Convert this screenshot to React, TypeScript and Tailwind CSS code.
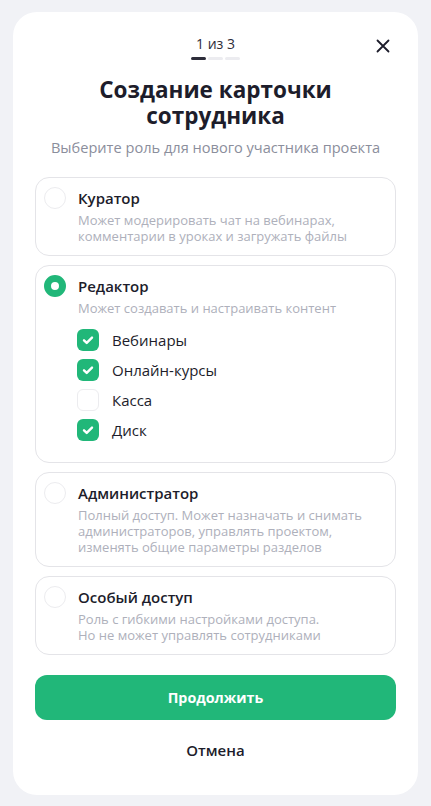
import { useState } from "react";

const roles = [
  {
    id: "curator",
    title: "Куратор",
    lines: ["Может модерировать чат на вебинарах,", "комментарии в уроках и загружать файлы"],
  },
  {
    id: "editor",
    title: "Редактор",
    lines: ["Может создавать и настраивать контент"],
  },
  {
    id: "admin",
    title: "Администратор",
    lines: [
      "Полный доступ. Может назначать и снимать",
      "администраторов, управлять проектом,",
      "изменять общие параметры разделов",
    ],
  },
  {
    id: "special",
    title: "Особый доступ",
    lines: ["Роль с гибкими настройками доступа.", "Но не может управлять сотрудниками"],
  },
];

const sections = ["Вебинары", "Онлайн-курсы", "Касса", "Диск"];

function Check({ on }: { on: boolean }) {
  if (!on)
    return <span className="w-[22px] h-[22px] rounded-[6px] border border-[#ececef] bg-white shrink-0" />;
  return (
    <span className="w-[22px] h-[22px] rounded-[6px] bg-[#21b779] flex items-center justify-center shrink-0">
      <svg width="22" height="22" viewBox="0 0 22 22" fill="none">
        <path d="M7 11.3l2.7 2.6L15 8.6" stroke="white" strokeWidth="2.4" strokeLinecap="round" strokeLinejoin="round" />
      </svg>
    </span>
  );
}

export default function App() {
  const [role, setRole] = useState("editor");
  const [checked, setChecked] = useState<Record<string, boolean>>({
    Вебинары: true,
    "Онлайн-курсы": true,
    Касса: false,
    Диск: true,
  });

  return (
    <div className="min-h-screen bg-[#f1f2f6] px-[13px] pt-[12px] pb-[10px] font-['Open_Sans',sans-serif] text-[#1d1d2b]">
      <div className="relative bg-white rounded-[24px] px-[22px] pt-[22px] pb-[35px] flex flex-col">
        <button className="absolute right-[23px] top-[22px] w-6 h-6 flex items-center justify-center">
          <svg width="14" height="14" viewBox="0 0 14 14" fill="none">
            <path d="M1.5 1.5l11 11M12.5 1.5l-11 11" stroke="#1d1d2b" strokeWidth="1.8" strokeLinecap="round" />
          </svg>
        </button>

        <div className="flex flex-col items-center">
          <p className="text-[14px] leading-[20px] text-[#2d2d3a]">1 из 3</p>
          <div className="mt-[3px] flex gap-[2px]">
            <span className="w-[15px] h-[3px] rounded-full bg-[#2d2d3a]" />
            <span className="w-[15px] h-[3px] rounded-full bg-[#ececf0]" />
            <span className="w-[15px] h-[3px] rounded-full bg-[#ececf0]" />
          </div>
        </div>

        <h1 className="mt-[17px] text-center text-[22.5px] leading-[26px] font-bold">
          Создание карточки
          <br />
          сотрудника
        </h1>
        <p className="mt-[8px] text-center text-[14.6px] leading-[20px] text-[#8b8e9c]">
          Выберите роль для нового участника проекта
        </p>

        <div className="mt-[20px] flex flex-col gap-[9px]">
          {roles.map((r) => {
            const active = role === r.id;
            return (
              <div
                key={r.id}
                onClick={() => setRole(r.id)}
                className="border border-[#e4e4e8] rounded-[14px] pl-[8px] pr-[12px] pt-[10px] pb-[11px] flex gap-[12px] cursor-pointer"
              >
                <div className="h-[20px] flex items-center">
                  {active ? (
                    <span className="w-[22px] h-[22px] rounded-full border-[7px] border-[#21b779] bg-white shrink-0" />
                  ) : (
                    <span className="w-[22px] h-[22px] rounded-full border-[1.5px] border-[#ececef] bg-white shrink-0" />
                  )}
                </div>
                <div className="flex-1">
                  <p className="text-[15px] leading-[20px] font-semibold">{r.title}</p>
                  <p className="mt-[4px] text-[13px] leading-[16px] text-[#aeb0bb]">
                    {r.lines.map((l) => (
                      <span key={l} className="block whitespace-nowrap">
                        {l}
                      </span>
                    ))}
                  </p>
                  {active && r.id === "editor" && (
                    <div className="mt-[13px] mb-[10px] flex flex-col gap-[8px] -ml-[1px]">
                      {sections.map((s) => (
                        <label
                          key={s}
                          onClick={(e) => {
                            e.stopPropagation();
                            setChecked({ ...checked, [s]: !checked[s] });
                          }}
                          className="flex items-center gap-[13px] h-[22px]"
                        >
                          <Check on={checked[s]} />
                          <span className="text-[15px] leading-[20px]">{s}</span>
                        </label>
                      ))}
                    </div>
                  )}
                </div>
              </div>
            );
          })}
        </div>

        <button className="mt-[20px] h-[45px] rounded-[12px] bg-[#21b779] text-white text-[14.3px] font-bold">
          Продолжить
        </button>
        <button className="mt-[20px] text-[15px] leading-[20px] font-semibold">Отмена</button>
      </div>
    </div>
  );
}
